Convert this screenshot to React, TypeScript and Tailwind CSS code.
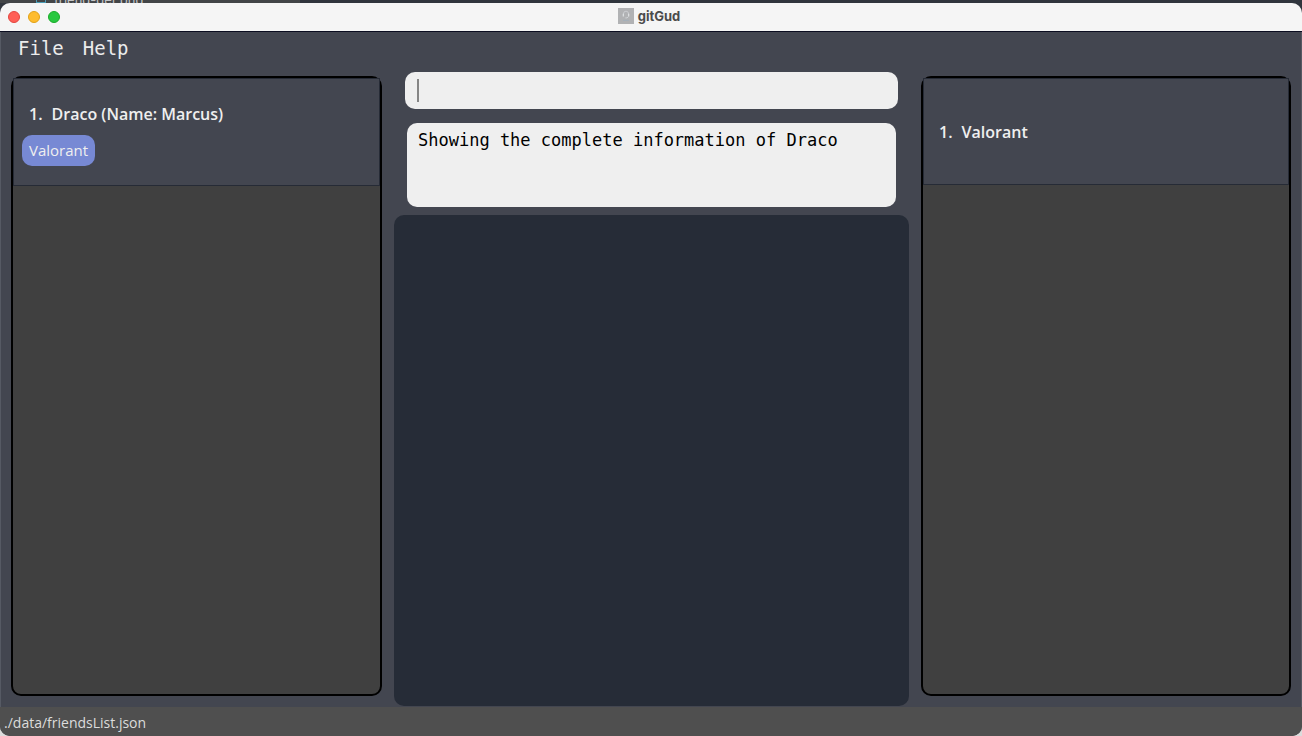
import { useState } from "react";

const friends = [{ id: 1, label: "Draco (Name: Marcus)", games: ["Valorant"] }];
const games = [{ id: 1, label: "Valorant" }];

function WindowButtons() {
  return (
    <div className="flex flex-1 items-center gap-2 pl-2">
      <button aria-label="Close" className="size-3 rounded-full border border-[#e2463f] bg-[#ff5f57]" />
      <button aria-label="Minimize" className="size-3 rounded-full border border-[#e1a116] bg-[#febc2e]" />
      <button aria-label="Zoom" className="size-3 rounded-full border border-[#1aab29] bg-[#28c840]" />
    </div>
  );
}

function AppIcon() {
  return (
    <svg viewBox="0 0 16 16" className="size-4" aria-hidden="true">
      <rect width="16" height="16" fill="#b1b2b4" />
      <path d="M5.4 7.4V6a2.6 2.8 0 0 1 5.2 0v1.4" fill="none" stroke="#cdcfd2" strokeWidth="0.9" />
      <path d="M5.3 5.8v2.6M10.7 5.8v2.6" stroke="#e2e4e6" strokeWidth="1.1" />
      <path d="M10.5 8.6 9 9.9H7.4" fill="none" stroke="#d3d6d9" strokeWidth="0.9" />
      <path d="M5 12.4h6" stroke="#a3afbb" strokeWidth="0.9" />
    </svg>
  );
}

export default function App() {
  const [command, setCommand] = useState("");

  return (
    <div className="flex h-screen flex-col overflow-hidden bg-[linear-gradient(to_bottom,#30353d_50%,#dcdcdc_50%)] font-['Open_Sans',sans-serif]">
      <div className="flex h-[3px] shrink-0 overflow-hidden">
        <div className="flex w-[300px] items-end gap-1 bg-[#424547] pl-9">
          <span className="h-[3px] w-[10px] border-x border-b border-[#4a9bb5]" />
          <span className="pl-1 font-[Inter,sans-serif] text-[13px] leading-[6px] text-[#c4c6c8]">friend-get.png</span>
        </div>
      </div>

      <div className="flex min-h-0 flex-1 flex-col overflow-hidden rounded-[10px] bg-[#434650]">
        <header className="flex h-[29px] shrink-0 items-center border-b border-[#0b0d20] bg-[#f5f5f5]">
          <WindowButtons />
          <div className="flex items-center gap-1 pr-3 pb-[2px]">
            <AppIcon />
            <h1 className="font-[Inter,sans-serif] text-[13px] leading-4 font-bold text-[#4b4b4b]">gitGud</h1>
          </div>
          <div className="flex-1" />
        </header>

        <div className="flex min-h-0 flex-1 flex-col border-x border-[#565a64]">
          <nav className="flex h-8 shrink-0 items-center gap-[19px] px-[17px] font-['DejaVu_Sans_Mono',monospace] text-[19px] leading-6 text-[#ececec]">
            <button>File</button>
            <button>Help</button>
          </nav>

          <main className="grid min-h-0 flex-1 grid-cols-[371fr_515fr_370fr] gap-3 px-[10px]">
            <section aria-label="Friends" className="mt-3 mb-[11px] rounded-[10px] border-2 border-black bg-[#404040]">
              <ul>
                {friends.map((friend) => (
                  <li key={friend.id} className="flex h-[108px] flex-col items-start border border-[#262b36] bg-[#434650] px-2 pt-6">
                    <p className="flex gap-[9px] pl-[7px] text-base leading-[22px] font-semibold text-[#efefef]">
                      <span>{friend.id}.</span>
                      <span>{friend.label}</span>
                    </p>
                    <div className="mt-[10px] flex gap-2">
                      {friend.games.map((game) => (
                        <span key={game} className="rounded-[10px] bg-[#7789d4] px-[7px] py-[5px] text-[15px] leading-[21px] text-[#efefef]">
                          {game}
                        </span>
                      ))}
                    </div>
                  </li>
                ))}
              </ul>
            </section>

            <section aria-label="Console" className="flex min-h-0 flex-col pt-2">
              <label className="mx-[11px] flex h-[37px] shrink-0 items-center rounded-[10px] bg-[#efefef] px-3">
                <span className="h-[23px] w-[2px] bg-[#858585]" />
                <input
                  aria-label="Enter command"
                  value={command}
                  onChange={(event) => setCommand(event.target.value)}
                  className="w-full bg-transparent font-['DejaVu_Sans_Mono',monospace] text-[17px] text-black outline-none"
                />
              </label>
              <output className="mx-[13px] mt-[14px] block h-[84px] shrink-0 rounded-[10px] bg-[#efefef] px-[11px] py-[6px] font-['DejaVu_Sans_Mono',monospace] text-[17px] leading-[22px] text-black">
                Showing the complete information of Draco
              </output>
              <div className="mt-2 mb-px flex-1 rounded-[10px] bg-[#262c37]" />
            </section>

            <section aria-label="Games" className="mt-3 mb-[11px] rounded-[10px] border-2 border-black bg-[#404040]">
              <ul>
                {games.map((game) => (
                  <li key={game.id} className="flex h-[107px] items-center gap-[9px] border border-[#262b36] bg-[#434650] px-[15px] text-base leading-[22px] font-semibold text-[#efefef]">
                    <span>{game.id}.</span>
                    <span>{game.label}</span>
                  </li>
                ))}
              </ul>
            </section>
          </main>
        </div>

        <footer className="flex h-[29px] shrink-0 items-center bg-[#4f4f4f] px-1 pt-[3px] text-sm text-[#dcdcdc]">
          ./data/friendsList.json
        </footer>
      </div>
    </div>
  );
}
